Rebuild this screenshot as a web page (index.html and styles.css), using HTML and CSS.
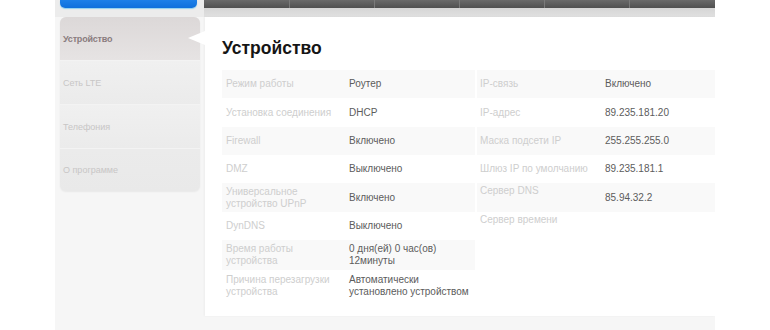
FILE: index.html
```html
<!DOCTYPE html>
<html lang="ru">
<head>
<meta charset="utf-8">
<link rel="stylesheet" href="styles.css">
</head>
<body>
<div class="page">
  <div class="top">
    <div class="top-left"><div class="blue-btn"></div></div>
    <div class="top-right">
      <div class="tabs">
        <div class="tab"></div><div class="tab"></div><div class="tab"></div><div class="tab"></div><div class="tab"></div><div class="tab last"></div>
      </div>
      <div class="tab-shelf"></div>
    </div>
  </div>
  <div class="main">
    <div class="sidebar">
      <ul class="menu">
        <li class="item active">Устройство</li>
        <li class="item">Сеть LTE</li>
        <li class="item">Телефония</li>
        <li class="item">О программе</li>
      </ul>
    </div>
    <div class="content">
      <div class="pointer"></div>
      <h1 class="title">Устройство</h1>
      <div class="tables">
        <div class="table left">
          <div class="row r1 shade"><div class="lbl">Режим работы</div><div class="val">Роутер</div></div>
          <div class="row r2"><div class="lbl">Установка соединения</div><div class="val">DHCP</div></div>
          <div class="row r3 shade"><div class="lbl">Firewall</div><div class="val">Включено</div></div>
          <div class="row r4"><div class="lbl">DMZ</div><div class="val">Выключено</div></div>
          <div class="row r5 shade"><div class="lbl">Универсальное<br>устройство UPnP</div><div class="val">Включено</div></div>
          <div class="row r6"><div class="lbl">DynDNS</div><div class="val">Выключено</div></div>
          <div class="row r7 shade"><div class="lbl">Время работы<br>устройства</div><div class="val">0 дня(ей) 0 час(ов)<br>12минуты</div></div>
          <div class="row r8"><div class="lbl">Причина перезагрузки<br>устройства</div><div class="val">Автоматически<br>установлено устройством</div></div>
        </div>
        <div class="table right">
          <div class="row r1 shade"><div class="lbl">IP-связь</div><div class="val">Включено</div></div>
          <div class="row r2"><div class="lbl">IP-адрес</div><div class="val">89.235.181.20</div></div>
          <div class="row r3 shade"><div class="lbl">Маска подсети IP</div><div class="val">255.255.255.0</div></div>
          <div class="row r4"><div class="lbl">Шлюз IP по умолчанию</div><div class="val">89.235.181.1</div></div>
          <div class="row r5 shade"><div class="lbl top-al">Сервер DNS</div><div class="val">85.94.32.2</div></div>
          <div class="row r6 short"><div class="lbl top-al">Сервер времени</div><div class="val"></div></div>
        </div>
      </div>
    </div>
  </div>
</div>
</body>
</html>
```

FILE: styles.css
```css
* { box-sizing: border-box; }
html, body { margin: 0; padding: 0; background: #ffffff; }
body {
  font-family: "Liberation Sans", Arial, sans-serif;
  width: 770px;
  height: 330px;
  overflow: hidden;
}
.page {
  margin-left: 55px;
  width: 660px;
  height: 330px;
  background: #f6f6f6;
  display: flex;
  flex-direction: column;
}
.top {
  display: flex;
  height: 17px;
  background: #ececec;
}
.top-left {
  width: 150px;
  padding: 0 5px;
}
.blue-btn {
  height: 8px;
  background: linear-gradient(#1d80e8, #0f70dc);
  border-radius: 0 0 5px 5px;
  box-shadow: 0 1px 1px #8fd0f0;
}
.top-right {
  flex: 1;
  margin-left: 2px;
  display: flex;
  flex-direction: column;
}
.tabs {
  height: 8px;
  display: flex;
  background: linear-gradient(#6a6a6a, #505050);
}
.tab {
  width: 85px;
  border-right: 1px solid #7a7a7a;
}
.tab:first-child { width: 86px; }
.tab.last { flex: 1; border-right: none; }
.tab-shelf {
  height: 9px;
  background: linear-gradient(#d6d6d6, #e0e0e0);
}
.main {
  flex: 1;
  display: flex;
}
.sidebar {
  width: 150px;
  padding: 0 5px;
}
.menu {
  list-style: none;
  margin: 0;
  padding: 0;
  border-radius: 6px;
  overflow: hidden;
  background: #eeeeee;
  box-shadow: 0 1px 2px rgba(0,0,0,0.06);
}
.item {
  height: 44px;
  display: flex;
  align-items: center;
  padding-left: 3px;
  font-size: 9px;
  color: #c8c6c6;
  border-bottom: 1px solid #f3f3f3;
  background: linear-gradient(#f0f0f0, #ebebeb);
}
.item:last-child { border-bottom: none; height: 42px; background: linear-gradient(#ebebeb, #e9e9e9); }
.item.active {
  color: #8a7c7e;
  font-weight: bold;
  letter-spacing: -0.2px;
  background: linear-gradient(#dcd8d8, #e6e3e3);
}
.content {
  flex: 1;
  position: relative;
  background: #ffffff;
  height: 299px;
  padding: 20px 0 0 17px;
  box-shadow: -1px 0 2px rgba(0,0,0,0.04);
}
.pointer {
  position: absolute;
  left: -17px;
  top: 14px;
  width: 0;
  height: 0;
  border-top: 7px solid transparent;
  border-bottom: 7px solid transparent;
  border-right: 17px solid #ffffff;
}
.title {
  margin: 0;
  font-size: 17.5px;
  line-height: 22px;
  font-weight: bold;
  color: #151515;
}
.tables {
  display: flex;
  gap: 2px;
  margin-top: 11px;
}
.table { display: flex; flex-direction: column; }
.table.left { width: 253px; }
.table.right { width: 238px; }
.row {
  display: flex;
  align-items: center;
  font-size: 10px;
  line-height: 12px;
}
.row.shade { background: #f9f9f9; }
.r1 { height: 28px; }
.r2 { height: 29px; }
.r3 { height: 28px; }
.r4 { height: 28px; }
.r5 { height: 29px; }
.r6 { height: 28px; }
.r7 { height: 30px; }
.r8 { height: 32px; }
.row.short { height: 20px; }
.lbl {
  color: #cecece;
  padding-left: 4px;
}
.left .lbl { width: 127px; }
.right .lbl { width: 128px; padding-left: 3px; }
.val { color: #5c5c5c; }
.lbl.top-al { align-self: flex-start; padding-top: 2px; }
```
